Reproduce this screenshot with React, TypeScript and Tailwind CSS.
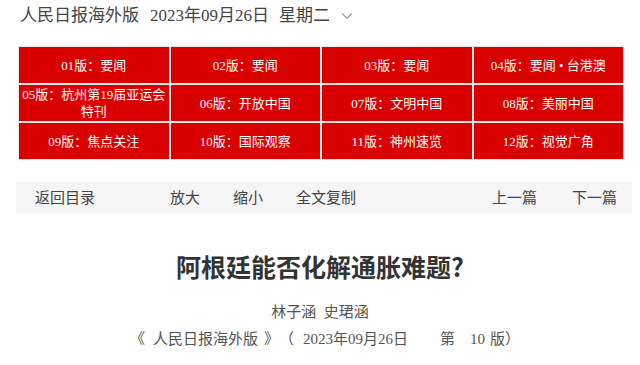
import { ChevronDown } from "lucide-react";

const serif = { fontFamily: '"Liberation Serif", "Noto Sans CJK SC", serif' };

const pages = [
  ["01版：要闻", "02版：要闻", "03版：要闻", "04版：要闻 • 台港澳"],
  ["05版：杭州第19届亚运会特刊", "06版：开放中国", "07版：文明中国", "08版：美丽中国"],
  ["09版：焦点关注", "10版：国际观察", "11版：神州速览", "12版：视觉广角"],
];

export default function App() {
  return (
    <div className="w-[640px] h-[365px] bg-white overflow-hidden text-[#333]" style={serif}>
      <div className="flex items-center h-[32px] pl-[20px] text-[17px] text-[#444]">
        <span>人民日报海外版</span>
        <span className="ml-[11px]">2023年09月26日</span>
        <span className="ml-[10px]">星期二</span>
        <ChevronDown className="ml-[8px] w-[18px] h-[18px] text-[#999]" strokeWidth={1.5} />
      </div>

      <div className="ml-[18px] mt-[14px] w-[606px] grid grid-cols-4 bg-[#e8e8e8] gap-[2px] border border-[#e8e8e8]">
        {pages.flat().map((p) => (
          <div
            key={p}
            className="bg-[#d90000] h-[36px] flex items-center justify-center text-center text-white text-[13px] leading-[17px] px-[3px]"
          >
            {p}
          </div>
        ))}
      </div>

      <div className="ml-[16px] mt-[22px] w-[616px] h-[32px] bg-[#f5f5f5] flex items-center text-[15px] text-[#444]">
        <span className="ml-[19px]">返回目录</span>
        <span className="ml-[75px]">放大</span>
        <span className="ml-[33px]">缩小</span>
        <span className="ml-[33px]">全文复制</span>
        <span className="ml-auto">上一篇</span>
        <span className="ml-[35px] mr-[15px]">下一篇</span>
      </div>

      <h1
        className="mt-[36px] text-center text-[25px] font-bold text-[#333] leading-[32px]"
        style={{ fontFamily: '"Noto Sans CJK SC", sans-serif' }}
      >
        阿根廷能否化解通胀难题?
      </h1>

      <div className="mt-[20px] text-center text-[15px] text-[#555] leading-[20px]">林子涵&nbsp;&nbsp;史珺涵</div>

      <div className="mt-[7px] flex pl-[130px] text-[15px] text-[#555] leading-[20px] whitespace-nowrap">
        <span>《</span>
        <span className="ml-[8px]">人民日报海外版</span>
        <span className="ml-[6px]">》</span>
        <span className="ml-[0px]">（</span>
        <span className="ml-[9px]">2023年09月26日</span>
        <span className="ml-[32px]">第</span>
        <span className="ml-[15px]">10</span>
        <span className="ml-[5px]">版）</span>
      </div>
    </div>
  );
}
